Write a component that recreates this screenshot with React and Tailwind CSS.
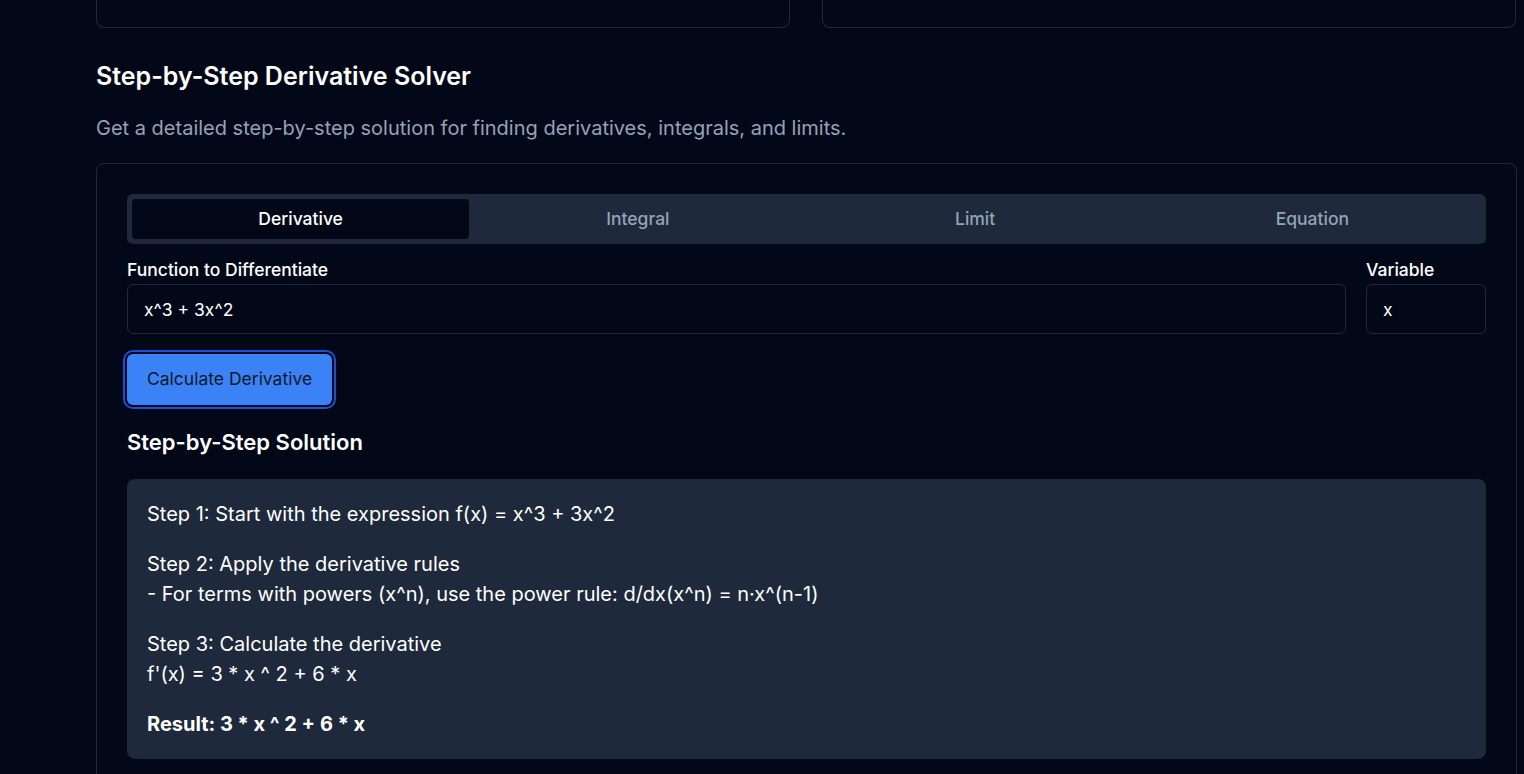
import { useState } from 'react';

const tabs = ['Derivative', 'Integral', 'Limit', 'Equation'];

const steps = [
  ['Step 1: Start with the expression f(x) = x^3 + 3x^2'],
  [
    'Step 2: Apply the derivative rules',
    '- For terms with powers (x^n), use the power rule: d/dx(x^n) = n·x^(n-1)',
  ],
  ['Step 3: Calculate the derivative', "f'(x) = 3 * x ^ 2 + 6 * x"],
];

const App = () => {
  const [active, setActive] = useState('Derivative');
  const [fn, setFn] = useState('x^3 + 3x^2');
  const [variable, setVariable] = useState('x');

  return (
    <div
      className="min-h-screen bg-[#020817] text-white overflow-hidden"
      style={{ fontFamily: 'Inter, "Noto Sans", sans-serif' }}
    >
      <div className="pl-[96px] w-[1517px] pb-10">
        {/* cards from the section above, cut off at the top */}
        <div className="w-[1420px] grid grid-cols-2 gap-8">
          <div className="h-[28px] border border-t-0 border-[#1e293b] rounded-b-lg" />
          <div className="h-[28px] border border-t-0 border-[#1e293b] rounded-b-lg" />
        </div>

        <h2 className="mt-8 text-[25px] leading-8 font-semibold">Step-by-Step Derivative Solver</h2>
        <p className="mt-[22px] text-xl leading-7 text-[#94a3b8]">
          Get a detailed step-by-step solution for finding derivatives, integrals, and limits.
        </p>

        <div className="mt-[21px] border border-[#1e293b] rounded-lg p-[30px]">
          {/* tabs */}
          <div className="grid grid-cols-4 bg-[#1e293b] rounded-md p-[5px]">
            {tabs.map((t) => (
              <button
                key={t}
                onClick={() => setActive(t)}
                className={
                  active === t
                    ? 'h-10 rounded-[4px] bg-[#020817] text-white font-medium text-[17.5px]'
                    : 'h-10 rounded-[4px] text-[#94a3b8] font-medium text-[17.5px]'
                }
              >
                {t}
              </button>
            ))}
          </div>

          {/* inputs */}
          <div className="mt-3 flex gap-5">
            <div className="flex-1 flex flex-col">
              <label className="text-[17.5px] leading-7 font-medium">Function to Differentiate</label>
              <input
                value={fn}
                onChange={(e) => setFn(e.target.value)}
                className="h-[50px] px-4 rounded-md border border-[#1e293b] bg-transparent text-[17.5px] text-white outline-none"
              />
            </div>
            <div className="w-[120px] flex flex-col">
              <label className="text-[17.5px] leading-7 font-medium">Variable</label>
              <input
                value={variable}
                onChange={(e) => setVariable(e.target.value)}
                className="h-[50px] px-4 rounded-md border border-[#1e293b] bg-transparent text-[17.5px] text-white outline-none"
              />
            </div>
          </div>

          <button className="mt-5 h-[51px] px-5 rounded-md bg-[#3b82f6] text-[#0f172a] text-[17.5px] ring-2 ring-[#1d4ed8] ring-offset-2 ring-offset-[#020817]">
            Calculate Derivative
          </button>

          <h3 className="mt-[23px] text-[22px] leading-7 font-semibold">Step-by-Step Solution</h3>

          {/* solution */}
          <div className="mt-[23px] bg-[#1e293b] rounded-lg p-5 text-xl leading-[30px] space-y-5">
            {steps.map((lines, i) => (
              <div key={i}>
                {lines.map((l) => (
                  <div key={l}>{l}</div>
                ))}
              </div>
            ))}
            <div className="font-bold">Result: 3 * x ^ 2 + 6 * x</div>
          </div>
        </div>
      </div>
    </div>
  );
};

export default App;
